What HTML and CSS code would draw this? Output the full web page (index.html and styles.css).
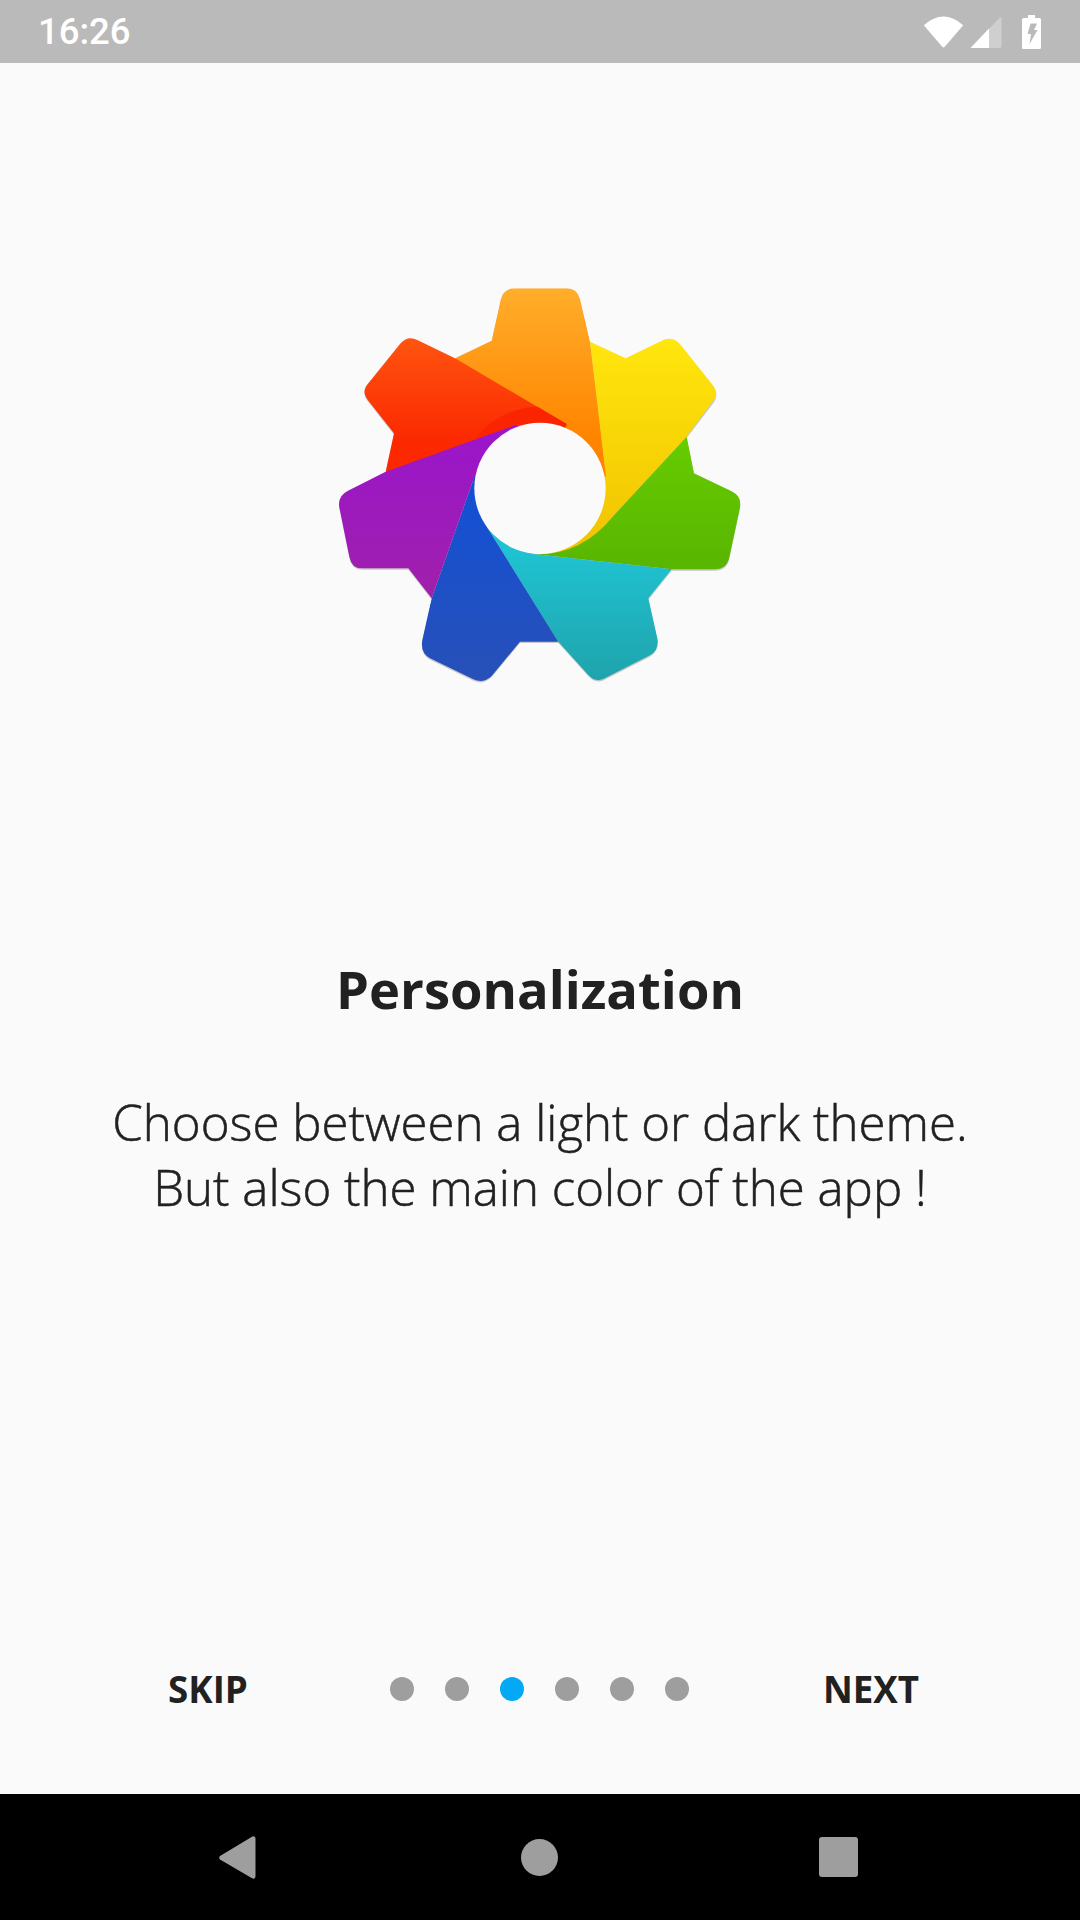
FILE: index.html
```html
<!DOCTYPE html>
<html lang="en">
<head>
<meta charset="utf-8">
<title>Personalization</title>
<link rel="stylesheet" href="styles.css">
</head>
<body>
<div class="app">
  <header class="status">
    <span class="time">16:26</span>
    <div class="status-icons">
      <svg class="ic-wifi" viewBox="0 0 41 32"><path d="M0.8 9.2Q20.5 -8 40.2 9.2L22 30.6Q20.5 32.2 19 30.6Z" fill="#fff"/></svg>
      <svg class="ic-signal" viewBox="0 0 32 32"><path d="M1 31.500L30 1.500Q31.500 0.500 31.500 2.500V30Q31.500 32 29.500 32H1.500Q0 32 1 31.500Z" fill="#fff" fill-opacity=".3"/><path d="M1 31.500L19 12.500V32H1.500Q0 32 1 31.500Z" fill="#fff"/></svg>
      <svg class="ic-battery" viewBox="0 0 19 34"><path fill-rule="evenodd" d="M6 0H13V3H17.500Q19 3 19 4.500V32.500Q19 34 17.500 34H1.500Q0 34 0 32.500V4.500Q0 3 1.500 3H6ZM8.500 8.500H15L12 15H15.500L7.500 29L9 19H5.500Z" fill="#fff"/></svg>
    </div>
  </header>
  <main class="content">
    <svg class="logo" viewBox="0 0 1320 1260">
      <defs>
        <path id="gear-shape" d="M515 212L542 90Q550 55 585 55H740Q772 55 780 88L810 215L917 265L1030 210Q1058 198 1080 222L1178 345Q1200 372 1178 398L1100 500L1122 610L1235 664Q1266 680 1260 712L1228 862Q1220 898 1185 898H1055L985 985L1012 1105Q1018 1140 990 1156L860 1222Q830 1242 805 1215L715 1115H600L515 1218Q490 1242 460 1228L330 1165Q300 1148 307 1110L335 985L265 895H125Q95 895 88 860L58 712Q52 678 84 662L197 605L222 490L145 392Q122 365 145 340L240 222Q262 195 292 210L405 265Z"/>
        <clipPath id="gear"><use href="#gear-shape"/></clipPath>
        <clipPath id="red-area"><path d="M405 265L740 462L660 655L197 605L100 620L0 300L200 100Z"/></clipPath>
        <linearGradient id="g-o" x1="0" y1="55" x2="0" y2="500" gradientUnits="userSpaceOnUse"><stop offset="0" stop-color="#ffae2b"/><stop offset="1" stop-color="#ff8500"/></linearGradient>
        <linearGradient id="g-r" x1="0" y1="200" x2="0" y2="520" gradientUnits="userSpaceOnUse"><stop offset="0" stop-color="#ff5510"/><stop offset="1" stop-color="#fb2800"/></linearGradient>
        <linearGradient id="g-y" x1="0" y1="210" x2="0" y2="800" gradientUnits="userSpaceOnUse"><stop offset="0" stop-color="#ffe60d"/><stop offset="1" stop-color="#f2c500"/></linearGradient>
        <linearGradient id="g-g" x1="0" y1="500" x2="0" y2="900" gradientUnits="userSpaceOnUse"><stop offset="0" stop-color="#66cc00"/><stop offset="1" stop-color="#59b500"/></linearGradient>
        <linearGradient id="g-c" x1="0" y1="850" x2="0" y2="1235" gradientUnits="userSpaceOnUse"><stop offset="0" stop-color="#1fc2d2"/><stop offset="1" stop-color="#1fa3ab"/></linearGradient>
        <linearGradient id="g-b" x1="0" y1="600" x2="0" y2="1235" gradientUnits="userSpaceOnUse"><stop offset="0" stop-color="#1150d8"/><stop offset="1" stop-color="#2850b8"/></linearGradient>
        <linearGradient id="g-p" x1="0" y1="470" x2="0" y2="990" gradientUnits="userSpaceOnUse"><stop offset="0" stop-color="#9a15cc"/><stop offset="1" stop-color="#a020aa"/></linearGradient>
      </defs>
      <use class="logo-shadow" href="#gear-shape" y="4"/>
      <g clip-path="url(#gear)">
        <path fill="url(#g-o)" d="M405 265L500 120L500 0H760L790 120L810 215L862 640L660 655Z"/>
        <path fill="url(#g-r)" d="M405 265L740 462L660 655L197 605L100 620L0 300L200 100Z"/>
        <circle fill="#fb2400" cx="660" cy="655" r="245" clip-path="url(#red-area)"/>
        <path fill="url(#g-y)" d="M810 215L900 100L1320 200L1100 500L880 738Q840 785 790 820L700 860L660 655L858 620Z"/>
        <path fill="url(#g-g)" d="M1100 500L1320 500L1320 1000L1055 898L640 852Q780 860 880 738Z"/>
        <path fill="url(#g-c)" d="M640 852L1055 898L1100 1300L760 1300L715 1115L500 770L660 655Z"/>
        <path fill="url(#g-b)" d="M463 620L660 655L500 770L715 1115L760 1300L250 1300L335 985Z"/>
        <path fill="url(#g-p)" d="M197 605L590 464L660 655L463 620L335 985L200 1000L0 900L0 640Z"/>
      </g>
      <circle class="logo-hole" cx="660" cy="655" r="197"/>
    </svg>
    <h1 class="title">Personalization</h1>
    <p class="desc">Choose between a light or dark theme.<br>But also the main color of the app !</p>
    <div class="controls">
      <span class="action">SKIP</span>
      <div class="dots">
        <i class="dot"></i><i class="dot"></i><i class="dot dot-active"></i><i class="dot"></i><i class="dot"></i><i class="dot"></i>
      </div>
      <span class="action">NEXT</span>
    </div>
  </main>
  <nav class="navbar">
    <svg class="ic-back" viewBox="0 0 37 43"><path d="M1 23.500Q-0.500 21.500 1 20L33 0.800Q36.500 -0.800 36.500 3V40Q36.500 43.800 33 42.200Z" fill="#9e9e9e"/></svg>
    <span class="ic-home"></span>
    <span class="ic-recent"></span>
  </nav>
</div>
</body>
</html>
```
FILE: styles.css
```css
* { box-sizing: border-box; }
html, body { margin: 0; padding: 0; }
body { width: 1080px; height: 1920px; overflow: hidden; background: #fafafa; font-family: "Open Sans", sans-serif; color: #212121; }
.app { display: flex; flex-direction: column; height: 1920px; }

.status { height: 63px; flex: none; background: #bababa; display: flex; align-items: center; justify-content: space-between; padding: 0 39px 0 38px; }
.time { font-family: Roboto, sans-serif; font-weight: 500; font-size: 36.5px; color: #fff; }
.status-icons { display: flex; align-items: center; }
.ic-wifi { width: 41px; height: 32px; margin-right: 6px; }
.ic-signal { width: 32px; height: 32px; margin-right: 20px; }
.ic-battery { width: 19px; height: 34px; }

.content { flex: 1; display: flex; flex-direction: column; align-items: center; padding-top: 207px; min-height: 0; }
.logo { width: 440px; height: 420px; flex: none; }
.logo-hole { fill: #fafafa; }
.logo-shadow { fill: #000; fill-opacity: .2; }
.title { margin: 264px 0 0; font-size: 52.5px; font-weight: 700; line-height: 70px; }
.desc { margin: 65px 0 0; font-size: 49.2px; font-weight: 300; -webkit-text-stroke: 0.5px #212121; line-height: 65px; text-align: center; color: #212121; }

.controls { margin-top: auto; width: 100%; height: 210px; padding: 0 27px 0 26px; display: grid; grid-template-columns: 1fr auto 1fr; align-items: center; }
.action { text-align: center; font-size: 36.7px; font-weight: 700; }
.dots { display: flex; gap: 31px; }
.dot { width: 24px; height: 24px; border-radius: 50%; background: #9e9e9e; }
.dot-active { background: #03a9f4; }

.navbar { height: 126px; flex: none; background: #000; position: relative; display: flex; align-items: center; justify-content: center; }
.ic-back { position: absolute; left: 219px; top: 42px; width: 37px; height: 43px; }
.ic-home { width: 37px; height: 37px; border-radius: 50%; background: #9e9e9e; margin-right: 2px; }
.ic-recent { position: absolute; left: 819px; top: 43px; width: 39px; height: 40px; border-radius: 3px; background: #9e9e9e; }
```
